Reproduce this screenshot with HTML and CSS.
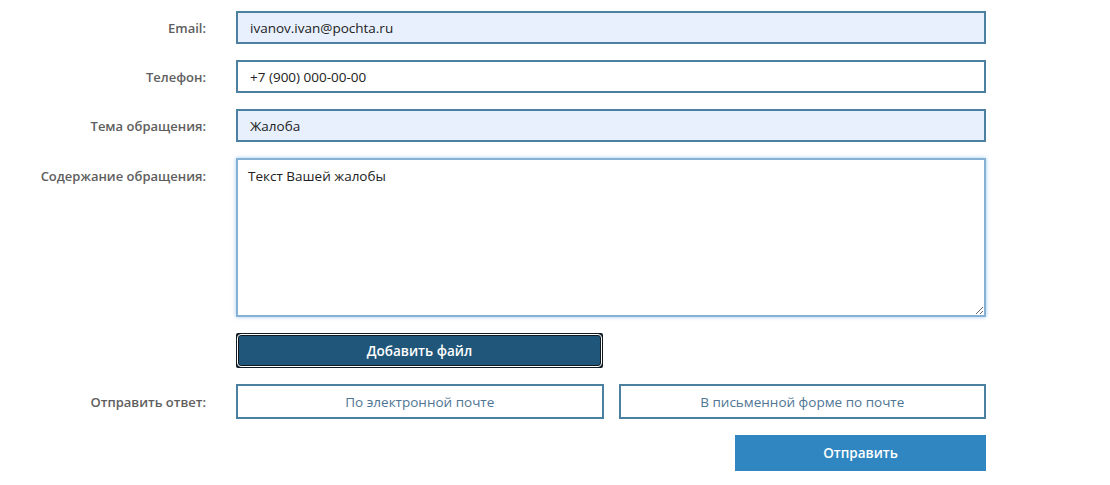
FILE: index.html
```html
<!DOCTYPE html>
<html lang="ru">
<head>
<meta charset="utf-8">
<title>Обращение</title>
<link rel="stylesheet" href="styles.css">
</head>
<body>
<form class="form">
  <div class="row">
    <label class="label">Email:</label>
    <div class="field"><input class="input autofill" type="text" value="ivanov.ivan@pochta.ru"></div>
  </div>
  <div class="row">
    <label class="label">Телефон:</label>
    <div class="field"><input class="input" type="text" value="+7 (900) 000-00-00"></div>
  </div>
  <div class="row">
    <label class="label">Тема обращения:</label>
    <div class="field"><input class="input autofill" type="text" value="Жалоба"></div>
  </div>
  <div class="row">
    <label class="label label-top">Содержание обращения:</label>
    <div class="field"><textarea class="textarea">Текст Вашей жалобы</textarea></div>
  </div>
  <div class="row">
    <div class="label"></div>
    <div class="field half"><div class="file-ring"><button type="button" class="file-btn">Добавить файл</button></div></div>
  </div>
  <div class="row">
    <label class="label">Отправить ответ:</label>
    <div class="field choices">
      <button type="button" class="choice">По электронной почте</button>
      <button type="button" class="choice">В письменной форме по почте</button>
    </div>
  </div>
  <div class="row">
    <div class="label"></div>
    <div class="field submit-wrap"><button type="button" class="submit">Отправить</button></div>
  </div>
</form>
</body>
</html>
```
FILE: styles.css
```css
* { box-sizing: border-box; }
body {
  margin: 0;
  background: #fff;
  font-family: "Open Sans", "Noto Sans", sans-serif;
}
.form {
  display: flex;
  flex-direction: column;
  gap: 16px;
  padding-top: 11px;
}
.row {
  display: grid;
  grid-template-columns: 206px 750px;
  column-gap: 30px;
  align-items: center;
}
.label {
  text-align: right;
  font-size: 13px;
  font-weight: 600;
  line-height: 16px;
  color: #5e5e5e;
}
.label-top {
  align-self: start;
  padding-top: 10px;
}
.input {
  display: block;
  width: 100%;
  height: 33px;
  border: 2px solid #4b80a1;
  padding: 0 12px;
  font-family: inherit;
  font-size: 13.5px;
  color: #222;
  background: #fff;
  outline: none;
}
.input.autofill { background: #e8f0fe; }
.textarea {
  display: block;
  width: 100%;
  height: 159px;
  border: 2px solid #86b1d6;
  box-shadow: 0 0 4px rgba(102, 170, 230, 0.6);
  padding: 7px 10px;
  font-family: inherit;
  font-size: 13.5px;
  color: #222;
  resize: vertical;
  outline: none;
}
.half { width: 367px; }
.file-ring {
  background: #0f1a22;
  padding: 1px;
  border-radius: 2px;
}
.file-btn {
  display: block;
  width: 100%;
  height: 33px;
  border: 1px solid #fff;
  border-radius: 4px;
  box-shadow: inset 0 0 0 1px #0f1a22;
  background: #1f5679;
  color: #fff;
  font-family: inherit;
  font-size: 13.5px;
  font-weight: 600;
  cursor: pointer;
}
.choices {
  display: flex;
  gap: 15px;
}
.choice {
  flex: 1;
  height: 35px;
  border: 2px solid #4b80a1;
  background: #fff;
  color: #4f7594;
  font-family: inherit;
  font-size: 13.5px;
  cursor: pointer;
}
.submit-wrap {
  display: flex;
  justify-content: flex-end;
}
.submit {
  width: 251px;
  height: 36px;
  border: none;
  background: #2f86c0;
  color: #fff;
  font-family: inherit;
  font-size: 13.5px;
  font-weight: 600;
  cursor: pointer;
}
```
